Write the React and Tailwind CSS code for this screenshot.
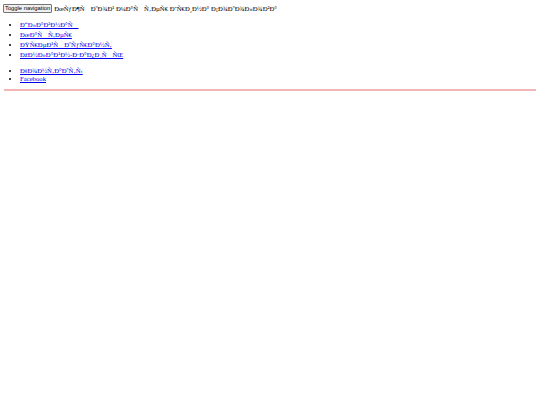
import React from 'react';

// the page text arrives as UTF-8 bytes read back as windows-1252
const CP1252 = {
  0x80: '\u20ac', 0x82: '\u201a', 0x83: '\u0192', 0x84: '\u201e', 0x85: '\u2026', 0x86: '\u2020', 0x87: '\u2021',
  0x88: '\u02c6', 0x89: '\u2030', 0x8a: '\u0160', 0x8b: '\u2039', 0x8c: '\u0152', 0x8e: '\u017d',
  0x91: '\u2018', 0x92: '\u2019', 0x93: '\u201c', 0x94: '\u201d', 0x95: '\u2022', 0x96: '\u2013', 0x97: '\u2014',
  0x98: '\u02dc', 0x99: '\u2122', 0x9a: '\u0161', 0x9b: '\u203a', 0x9c: '\u0153', 0x9e: '\u017e', 0x9f: '\u0178',
};

function garble(s) {
  const bytes = new TextEncoder().encode(s);
  let out = '';
  for (const b of bytes) out += CP1252[b] || String.fromCharCode(b);
  return out;
}

const mainLinks = ['Главная', 'Мастер', 'Прейскурант', 'Онлайн-запись'];
const sideLinks = [garble('Контакты'), 'Facebook'];

export default function App() {
  return (
    <div className="m-[4px] font-[family-name:'Liberation_Serif',serif] text-[6.7px] text-black leading-[8px]">
      <div className="flex items-center h-[9px]">
        <button className="ml-[-1px] px-[1px] h-[9px] leading-[7px] text-[5.8px] font-[family-name:'Liberation_Sans',sans-serif] bg-[#efefef] border border-[#767676] rounded-[1px]">
          Toggle navigation
        </button>
        <span className="ml-[2px]">{garble('Мужской мастер Ирина Соколова')}</span>
      </div>

      <ul className="list-disc pl-[16px] mt-[7px] mb-0">
        {mainLinks.map(t => (
          <li key={t} className="h-[10px] leading-[10px]">
            <a href="#" className="text-[#0000ee] underline">{garble(t)}</a>
          </li>
        ))}
      </ul>

      <ul className="list-disc pl-[16px] mt-[7px] mb-[7px]">
        {sideLinks.map(t => (
          <li key={t} className="leading-[7.5px]">
            <a href="#" className="text-[#0000ee] underline">{t}</a>
          </li>
        ))}
      </ul>

      <hr className="h-[2px] border-0 bg-[#f2b6b6]" />
    </div>
  );
}
